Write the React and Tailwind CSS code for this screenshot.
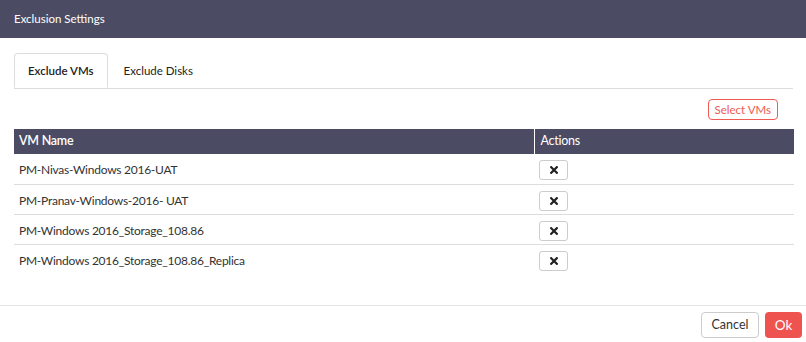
import React from 'react';

const vms = [
  'PM-Nivas-Windows 2016-UAT',
  'PM-Pranav-Windows-2016- UAT',
  'PM-Windows 2016_Storage_108.86',
  'PM-Windows 2016_Storage_108.86_Replica',
];

const RemoveIcon = () => (
  <svg width="8" height="8" viewBox="0 0 10 10">
    <path d="M1.5 1.5 L8.5 8.5 M8.5 1.5 L1.5 8.5" stroke="#222" strokeWidth="2.8" strokeLinecap="square" />
  </svg>
);

const App = () => {
  return (
    <div className="w-[806px] h-[342px] bg-white text-[#333] flex flex-col" style={{ fontFamily: 'Lato, "Open Sans", sans-serif' }}>
      <div className="h-[38px] bg-[#4b4c63] text-white text-[11.5px] flex items-center px-[14px]">
        Exclusion Settings
      </div>

      <div className="flex-1 px-[14px] pt-[15px]">
        <div className="flex border-b border-[#ddd] text-[11.5px] mr-[-1px]">
          <div className="h-[35px] px-[13px] flex items-center border border-[#ddd] border-b-white rounded-t-[4px] -mb-px bg-white font-semibold text-[#222]">
            Exclude VMs
          </div>
          <div className="h-[35px] px-[16px] flex items-center text-[#222]">
            Exclude Disks
          </div>
        </div>

        <div className="flex justify-end mt-[10px] mr-[14px]">
          <button className="h-[21px] px-[6px] border border-[#ef5a52] text-[#ef5a52] rounded-[4px] text-[11.5px] leading-none">
            Select VMs
          </button>
        </div>

        <table className="w-[780px] mt-[9px] border-collapse text-[12px] tracking-[-0.25px]">
          <thead>
            <tr className="bg-[#4b4c63] text-white h-[25px]">
              <th className="w-[520px] text-left font-semibold px-[5px] border-r border-white text-[12.5px]">VM Name</th>
              <th className="text-left font-normal px-[6px] text-[12.5px]">Actions</th>
            </tr>
          </thead>
          <tbody>
            {vms.map((vm, i) => (
              <tr key={vm} className={`h-[30px] ${i < vms.length - 1 ? 'border-b border-[#ddd]' : ''}`}>
                <td className="px-[5px] align-top pt-[7px]">{vm}</td>
                <td className="px-[5px] align-top pt-[6px]">
                  <button className="w-[29px] h-[20px] border border-[#ccc] rounded-[3px] flex items-center justify-center bg-white">
                    <RemoveIcon />
                  </button>
                </td>
              </tr>
            ))}
          </tbody>
        </table>
      </div>

      <div className="h-[37px] border-t border-[#e5e5e5] flex justify-end items-start pt-[6px] pr-[4px] gap-[6px]">
        <button className="h-[26px] w-[58px] border border-[#ccc] rounded-[4px] text-[12.5px] text-[#333] bg-white">
          Cancel
        </button>
        <button className="h-[26px] w-[37px] rounded-[4px] text-[13.5px] text-white bg-[#ef5350]">
          Ok
        </button>
      </div>
    </div>
  );
};

export default App;
